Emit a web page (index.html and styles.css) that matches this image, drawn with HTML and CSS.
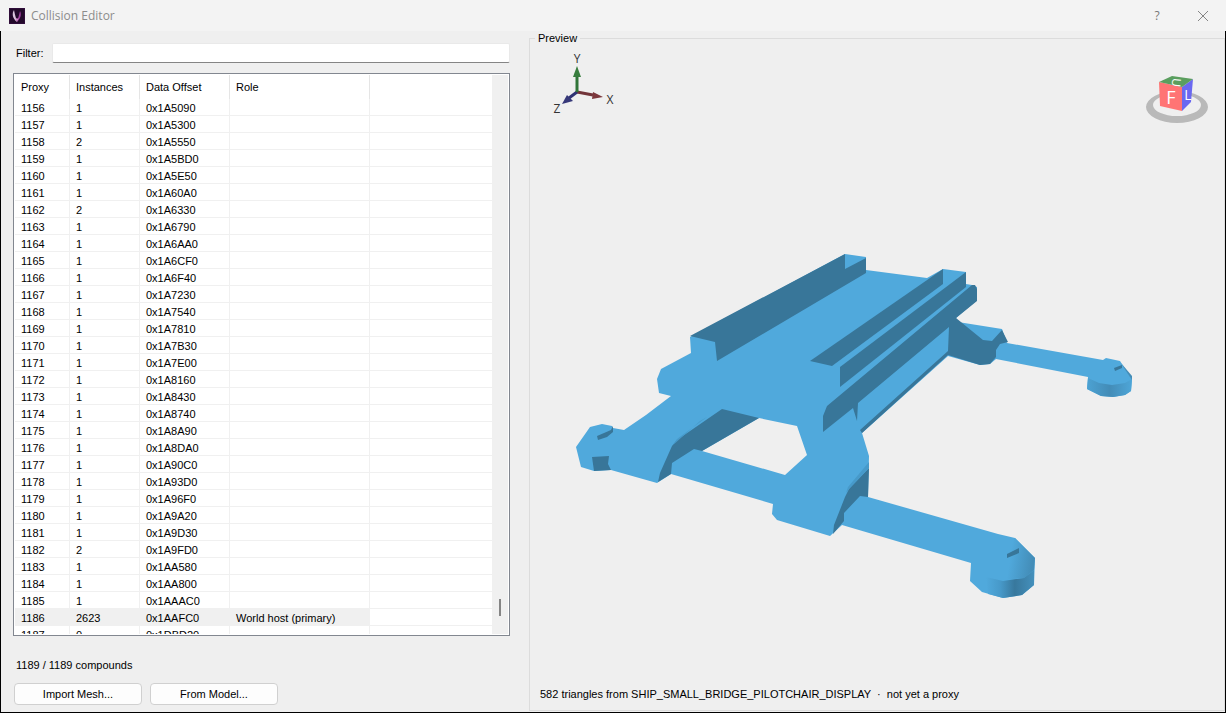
FILE: index.html
```html
<!DOCTYPE html>
<html lang="en">
<head>
<meta charset="utf-8">
<title>Collision Editor</title>
<link rel="stylesheet" href="styles.css">
</head>
<body>
<div class="window">
<header class="titlebar">
  <svg class="app-icon" viewBox="0 0 16 16" aria-hidden="true">
    <rect width="16" height="16" fill="#23092b"/>
    <path d="M0 0h16v16H0z" fill="none" stroke="#3d1248"/>
    <path d="M5 2C3 5 3 10 8 14C7 10 6 7 5 2z" fill="#d9c3dc"/>
    <path d="M11 3C13 7 11 11 8 14C9 10 10 8 11 3z" fill="#a13fa0"/>
    <path d="M6 9C8 11 9 11 10 9L8 14z" fill="#d98ad0"/>
  </svg>
  <h1 class="title">Collision Editor</h1>
  <button class="caption-button" type="button" aria-label="Help">?</button>
  <button class="caption-button" type="button" aria-label="Close">
    <svg class="close-icon" viewBox="0 0 12 12" aria-hidden="true"><path d="M1 1L11 11M11 1L1 11" fill="none" stroke="#858585"/></svg>
  </button>
</header>
<main class="content">
<section class="sidebar">
  <div class="filter">
    <label for="filter">Filter:</label>
    <input class="filter-input" id="filter" type="text">
  </div>
  <div class="list">
    <div class="list-view">
    <table class="grid">
      <colgroup><col class="col-proxy"><col class="col-instances"><col class="col-offset"><col class="col-role"><col></colgroup>
      <thead><tr><th>Proxy</th><th>Instances</th><th>Data Offset</th><th>Role</th><th></th></tr></thead>
      <tbody>
      <tr><td>1156</td><td>1</td><td>0x1A5090</td><td></td><td></td></tr>
      <tr><td>1157</td><td>1</td><td>0x1A5300</td><td></td><td></td></tr>
      <tr><td>1158</td><td>2</td><td>0x1A5550</td><td></td><td></td></tr>
      <tr><td>1159</td><td>1</td><td>0x1A5BD0</td><td></td><td></td></tr>
      <tr><td>1160</td><td>1</td><td>0x1A5E50</td><td></td><td></td></tr>
      <tr><td>1161</td><td>1</td><td>0x1A60A0</td><td></td><td></td></tr>
      <tr><td>1162</td><td>2</td><td>0x1A6330</td><td></td><td></td></tr>
      <tr><td>1163</td><td>1</td><td>0x1A6790</td><td></td><td></td></tr>
      <tr><td>1164</td><td>1</td><td>0x1A6AA0</td><td></td><td></td></tr>
      <tr><td>1165</td><td>1</td><td>0x1A6CF0</td><td></td><td></td></tr>
      <tr><td>1166</td><td>1</td><td>0x1A6F40</td><td></td><td></td></tr>
      <tr><td>1167</td><td>1</td><td>0x1A7230</td><td></td><td></td></tr>
      <tr><td>1168</td><td>1</td><td>0x1A7540</td><td></td><td></td></tr>
      <tr><td>1169</td><td>1</td><td>0x1A7810</td><td></td><td></td></tr>
      <tr><td>1170</td><td>1</td><td>0x1A7B30</td><td></td><td></td></tr>
      <tr><td>1171</td><td>1</td><td>0x1A7E00</td><td></td><td></td></tr>
      <tr><td>1172</td><td>1</td><td>0x1A8160</td><td></td><td></td></tr>
      <tr><td>1173</td><td>1</td><td>0x1A8430</td><td></td><td></td></tr>
      <tr><td>1174</td><td>1</td><td>0x1A8740</td><td></td><td></td></tr>
      <tr><td>1175</td><td>1</td><td>0x1A8A90</td><td></td><td></td></tr>
      <tr><td>1176</td><td>1</td><td>0x1A8DA0</td><td></td><td></td></tr>
      <tr><td>1177</td><td>1</td><td>0x1A90C0</td><td></td><td></td></tr>
      <tr><td>1178</td><td>1</td><td>0x1A93D0</td><td></td><td></td></tr>
      <tr><td>1179</td><td>1</td><td>0x1A96F0</td><td></td><td></td></tr>
      <tr><td>1180</td><td>1</td><td>0x1A9A20</td><td></td><td></td></tr>
      <tr><td>1181</td><td>1</td><td>0x1A9D30</td><td></td><td></td></tr>
      <tr><td>1182</td><td>2</td><td>0x1A9FD0</td><td></td><td></td></tr>
      <tr><td>1183</td><td>1</td><td>0x1AA580</td><td></td><td></td></tr>
      <tr><td>1184</td><td>1</td><td>0x1AA800</td><td></td><td></td></tr>
      <tr><td>1185</td><td>1</td><td>0x1AAAC0</td><td></td><td></td></tr>
      <tr class="selected"><td>1186</td><td>2623</td><td>0x1AAFC0</td><td>World host (primary)</td><td></td></tr>
      <tr><td>1187</td><td>0</td><td>0x1DBD20</td><td></td><td></td></tr>
      </tbody>
    </table>
    </div>
    <div class="scrollbar"><div class="thumb"></div></div>
  </div>
  <p class="count">1189 / 1189 compounds</p>
  <div class="actions">
    <button class="push" type="button">Import Mesh...</button>
    <button class="push" type="button">From Model...</button>
  </div>
</section>
<fieldset class="preview">
  <legend>Preview</legend>
  <svg class="viewport" viewBox="530 45 694 641" role="img" aria-label="3D collision mesh">
    <defs>
      <linearGradient id="pad"><stop offset="0" stop-color="#50a9dc"/><stop offset=".3" stop-color="#4799c9"/><stop offset=".6" stop-color="#38789d"/><stop offset="1" stop-color="#4490bc"/></linearGradient>
      <linearGradient id="pad-rear"><stop offset="0" stop-color="#4ca2d3"/><stop offset=".5" stop-color="#438cb7"/><stop offset="1" stop-color="#4ea6d8"/></linearGradient>
      <linearGradient id="cap" x1="0" y1="0" x2="1" y2=".2"><stop offset=".3" stop-color="#50a9dc"/><stop offset="1" stop-color="#438db8"/></linearGradient>
    </defs>
    <!-- lit surfaces, with the opening between the struts -->
    <path class="lit" fill-rule="evenodd" d="M690 337L691 353L661 369L657 379L659 393L671 396L646 415L624 430L613 428L612 426L602 424L590 427L576 447L581 467L594 471L611 470L657 483L671 474L773 504L772 514L777 520L830 536L842 525L971 563L970 581L982 592L1003 598L1022 595L1034 585L1035 558L1015 538L998 534L868 497L869 456L862 433L948 356L980 365L990 364L996 359L1088 377L1087 389L1101 396L1113 397L1125 395L1131 391L1132 379L1120 361L1106 358L1103 360L1007 343L1002 329L958 322L956 318L976 301L977 287L972 285L966 284L966 272L943 269L927 278L866 270L866 257L845 254ZM759 418L797 426L807 455L785 475L702 451Z"/>
    <!-- shaded faces -->
    <g class="shade">
      <path d="M690 336L845 254L845 269L866 258L866 273L717 361L715 342Z"/>
      <path d="M810 361L943 269L943 284L832 366Z"/>
      <path d="M840 367L966 272L966 287L840 387Z"/>
      <path d="M823 432L823 416L827 406L972 285L975 285L977 289L977 301L956 318L983 340L992 341L1002 330L1008 342L1000 344L996 350L996 357L990 364L980 365L948 355L862 433L860 430L948 351L949 327L858 403L857 421L853 408Z"/>
      <path d="M722 409L759 418L702 451L694 449L672 463L671 474L658 482L660 473L672 446L677 440Z"/>
      <path d="M869 468L868 497L860 496L844 513L844 521L833 534L834 525L845 497L849 489Z"/>
      <path d="M592 457L609 456L608 464L611 470L594 471Z"/>
      <path d="M597 436L611 430L613 426L613 432L607 437L598 440Z"/>
      <path d="M1114 368L1122 365L1122 368L1115 371Z"/>
    </g>
    <path fill="#479aca" d="M700 421L707 417L677 439L673 445ZM869 462L869 468L849 489L846 493L848 487Z"/>
    <path fill="url(#cap)" d="M1015 538L1035 558L1034 570L1024 578L1003 580L1003 560Z"/>
    <path class="shade" d="M1007 554L1019 548L1019 553L1007 558Z"/>
    <path fill="url(#pad)" d="M986 577L1003 581L1024 578L1034 570L1034 585L1022 595L1003 598L988 594Z"/>
    <path fill="url(#pad-rear)" d="M1088 378L1099 383L1112 385L1125 383L1132 379L1131 391L1125 395L1113 397L1101 396L1087 389Z"/>
    <path fill="#438cb7" d="M1121 363L1132 376L1132 380L1126 371Z"/>
    <!-- axis indicator -->
    <g stroke-width="3" fill="none">
      <path stroke="#723439" d="M577 92L593 95"/>
      <path stroke="#303374" d="M577 92L569 98"/>
      <path stroke="#317539" d="M577 92V75"/>
    </g>
    <path fill="#387d3e" d="M577 66L581 77H573Z"/>
    <path fill="#7c383d" d="M603 97L592 99L593 92Z"/>
    <path fill="#363879" d="M562 104L567 95L573 101Z"/>
    <g class="axis-label"><text x="577" y="63">Y</text><text x="610" y="104">X</text><text x="557" y="113">Z</text></g>
    <!-- orientation cube -->
    <path fill="#b9b9b9" fill-rule="evenodd" d="M1146 107a31 16 0 0 1 62 0a31 16 0 0 1 -62 0ZM1153 105a24 11 0 0 0 48 0a24 11 0 0 0 -48 0Z"/>
    <path fill="#ff7474" d="M1159 82L1182 87L1182 111L1160 106Z"/>
    <path fill="#6a68f0" d="M1182 87L1193 79L1191 102L1182 111Z"/>
    <path fill="#5a9e5e" d="M1159 82L1172 76L1193 79L1182 87Z"/>
    <g class="cube-label"><text class="cube-front" x="1171" y="104">F</text><text class="cube-side" x="1188" y="100">L</text><text class="cube-top" transform="translate(1172 82) rotate(96)">U</text></g>
  </svg>
  <p class="status">582 triangles from SHIP_SMALL_BRIDGE_PILOTCHAIR_DISPLAY &nbsp;·&nbsp; not yet a proxy</p>
</fieldset>
</main>
</div>
</body>
</html>
```
FILE: styles.css
```css
* { box-sizing: border-box; }
body { margin: 0; background: #efefef; color: #000; font: 11px/16px "Liberation Sans", sans-serif; }
h1, p { margin: 0; font: inherit; }
button, input { font: inherit; color: inherit; }
.window { display: flex; flex-direction: column; height: 100vh; }
.titlebar { display: flex; align-items: center; height: 31px; padding-left: 9px; background: #f3f3f3; }
.app-icon { width: 16px; height: 16px; }
.title { flex: 1; padding-left: 6px; color: #8c8c8c; font: 12px/16px "Open Sans", sans-serif; }
.caption-button { display: grid; place-items: center; width: 46px; height: 30px; padding: 0; border: 0; background: none; color: #777; font: 12px/16px "Open Sans", sans-serif; }
.close-icon { width: 12px; height: 12px; }
.content { flex: 1; min-height: 0; display: grid; grid-template-columns: 528fr 696fr; grid-template-rows: minmax(0, 1fr); border: solid #000; border-width: 0 1px 1px; }
.sidebar { display: flex; flex-direction: column; min-width: 0; padding: 12px 19px 7px 12px; }
.filter { display: flex; align-items: center; gap: 8px; padding-left: 3px; }
.filter-input { flex: 1; min-width: 0; height: 20px; padding: 0 4px; border: 1px solid #e9e9e9; border-bottom-color: #858585; border-radius: 2px; background: #fff; }
.list { flex: 1; min-height: 0; display: flex; margin-top: 10px; border: 1px solid #828790; background: #fff; padding: 1px; }
.list-view { flex: 1; min-width: 0; overflow: hidden; }
.grid { width: 100%; table-layout: fixed; border-collapse: separate; border-spacing: 0; }
.col-proxy { width: 55px; }
.col-instances { width: 70px; }
.col-offset { width: 90px; }
.col-role { width: 140px; }
.grid th { height: 24px; padding: 0 6px; border-right: 1px solid #e5e5e5; text-align: left; font-weight: normal; }
.grid td { height: 17px; padding: 2px 6px 0; border: solid #f0f0f0; border-width: 0 1px 1px 0; line-height: 14px; white-space: nowrap; }
.grid th:last-child, .grid td:last-child { border-right: 0; }
.selected td:not(:last-child) { background: #f0f0f0; }
.scrollbar { width: 16px; background: #f0f0f0; display: flex; flex-direction: column; align-items: center; justify-content: flex-end; padding-bottom: 18px; }
.thumb { width: 2px; height: 17px; background: #858585; }
.count { margin-top: 21px; padding-left: 3px; }
.actions { display: flex; gap: 8px; margin-top: 10px; padding-left: 1px; }
.push { width: 128px; height: 22px; padding: 0; border: 1px solid #d0d0d0; border-radius: 4px; background: #fdfdfd; }
.preview { display: flex; flex-direction: column; min-width: 0; margin: 0 0 1px; padding: 0 0 8px; border: 1px solid #dcdcdc; }
.preview legend { margin-left: 5px; padding: 0 3px; line-height: 14px; }
.viewport { flex: 1; width: 100%; min-height: 0; }
.lit { fill: #50a9dc; }
.shade { fill: #387699; }
.axis-label { fill: #333; font: 12px "Open Sans", sans-serif; text-anchor: middle; }
.cube-label { fill: #fff; font: 18px "Open Sans", sans-serif; text-anchor: middle; }
.cube-side { font-size: 14px; }
.cube-top { font-size: 12px; }
.status { padding-left: 10px; }
```
